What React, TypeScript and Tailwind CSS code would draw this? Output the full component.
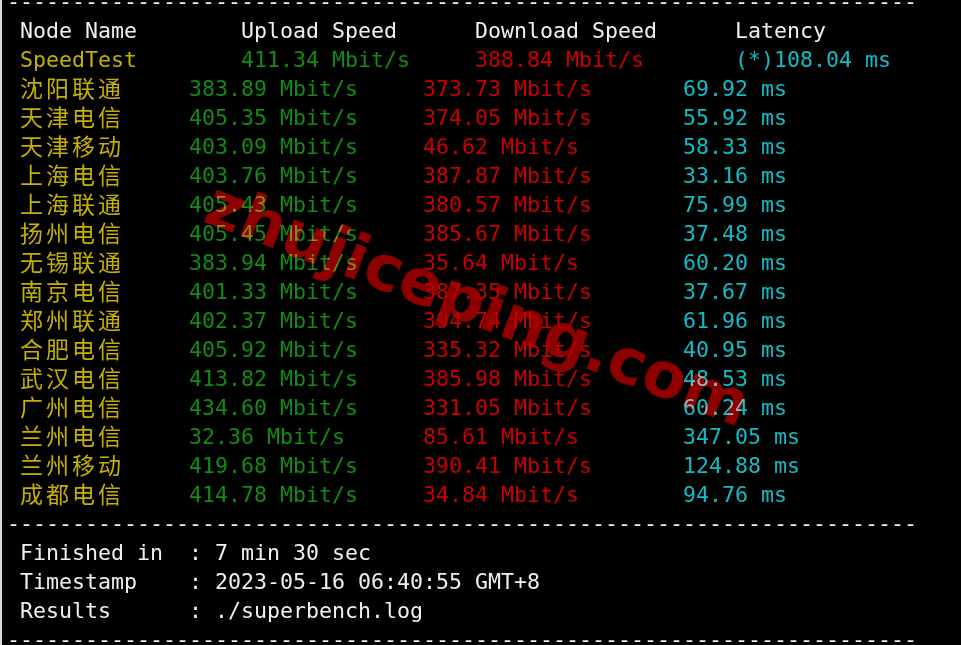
import React from "react";

const Y = "text-[#c4b000]";
const G = "text-[#138a13]";
const R = "text-[#c80000]";
const C = "text-[#12bcc4]";
const W = "text-[#f0f0f0]";

type Row = [string, string, string, string];

const rows: Row[] = [
  ["沈阳联通", "383.89", "373.73", "69.92"],
  ["天津电信", "405.35", "374.05", "55.92"],
  ["天津移动", "403.09", "46.62", "58.33"],
  ["上海电信", "403.76", "387.87", "33.16"],
  ["上海联通", "405.43", "380.57", "75.99"],
  ["扬州电信", "405.45", "385.67", "37.48"],
  ["无锡联通", "383.94", "35.64", "60.20"],
  ["南京电信", "401.33", "387.35", "37.67"],
  ["郑州联通", "402.37", "394.74", "61.96"],
  ["合肥电信", "405.92", "335.32", "40.95"],
  ["武汉电信", "413.82", "385.98", "48.53"],
  ["广州电信", "434.60", "331.05", "60.24"],
  ["兰州电信", "32.36", "85.61", "347.05"],
  ["兰州移动", "419.68", "390.41", "124.88"],
  ["成都电信", "414.78", "34.84", "94.76"],
];

const DASHES = "-".repeat(70);

function Dashes() {
  return <div className={`h-[29px] whitespace-pre ${W}`}>{DASHES}</div>;
}

export default function App() {
  return (
    <div className="relative w-[961px] h-[645px] overflow-hidden bg-black border-l-2 border-[#dcdcdc]">
      <div className="mt-[-13px] pl-[5px] font-['DejaVu_Sans_Mono',monospace] text-[21.6px] leading-[29px] whitespace-pre">
        <Dashes />
        <div className={`flex h-[29px] ${W}`}>
          <span className="w-[13px]"> </span>
          <span className="w-[221px]">Node Name</span>
          <span className="w-[234px]">Upload Speed</span>
          <span className="w-[260px]">Download Speed</span>
          <span>Latency</span>
        </div>
        <div className="flex h-[29px]">
          <span className="w-[13px]"> </span>
          <span className={`w-[221px] ${Y}`}>SpeedTest</span>
          <span className={`w-[234px] ${G}`}>411.34 Mbit/s</span>
          <span className={`w-[260px] ${R}`}>388.84 Mbit/s</span>
          <span className={C}>(*)108.04 ms</span>
        </div>
        {rows.map(([name, up, down, lat]) => (
          <div key={name} className="flex h-[29px]">
            <span className="w-[13px]"> </span>
            <span
              className={`w-[169px] font-['Noto_Sans_CJK_SC',sans-serif] text-[23px] tracking-[3px] leading-[27px] ${Y}`}
            >
              {name}
            </span>
            <span className={`w-[234px] ${G}`}>{up} Mbit/s</span>
            <span className={`w-[260px] ${R}`}>{down} Mbit/s</span>
            <span className={C}>{lat} ms</span>
          </div>
        ))}
        <Dashes />
        <div className={`h-[29px] ${W}`}>{" Finished in  : 7 min 30 sec"}</div>
        <div className={`h-[29px] ${W}`}>{" Timestamp    : 2023-05-16 06:40:55 GMT+8"}</div>
        <div className={`h-[29px] ${W}`}>{" Results      : ./superbench.log"}</div>
        <Dashes />
      </div>
      <div className="pointer-events-none absolute left-[476px] top-[304px] -translate-x-1/2 -translate-y-1/2 rotate-[21deg] whitespace-nowrap font-['DejaVu_Sans',sans-serif] text-[63px] font-bold leading-none text-[#8e0000] mix-blend-lighten">
        zhujiceping.com
      </div>
    </div>
  );
}
